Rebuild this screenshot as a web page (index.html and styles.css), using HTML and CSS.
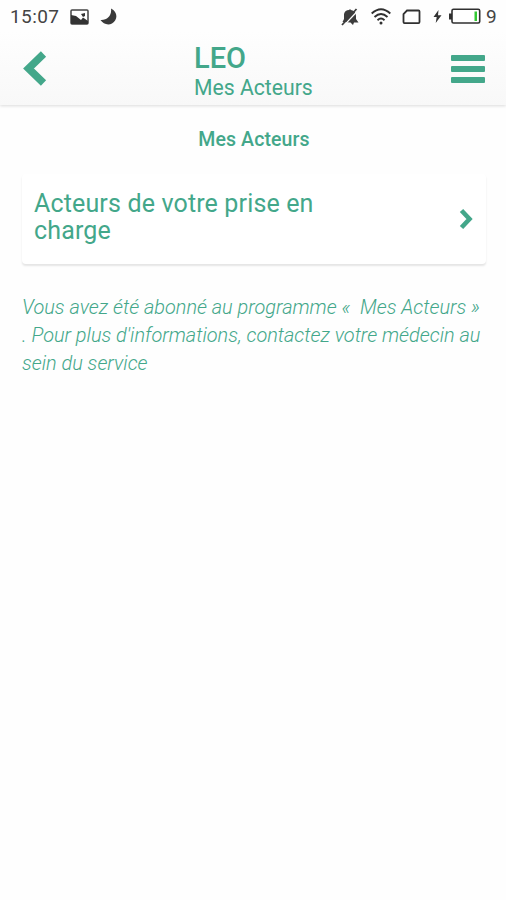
FILE: index.html
```html
<!DOCTYPE html>
<html lang="fr">
<head>
    <meta charset="UTF-8">
    <meta name="viewport" content="width=device-width, initial-scale=1.0">
    <title>LEO - Mes Acteurs</title>
    <link rel="stylesheet" href="styles.css">
</head>
<body>
    <header class="header">
        <div class="status-bar">
            <div class="status-left">
                <span class="time">15:07</span>
                <svg class="picture" width="19" height="16" viewBox="0 0 19 16">
                    <rect x="1" y="1" width="17" height="14" rx="1" fill="#fff" stroke="#444" stroke-width="1.5"/>
                    <path d="M1 6L6 7L11 11L13 8.500L18 12V15H1z" fill="#333"/>
                    <path d="M11 5L15 4V7L13 8z" fill="#333"/>
                </svg>
                <svg class="moon" width="17" height="17" viewBox="0 0 17 17">
                    <path d="M11 0.500C18 4 18 12 12 15.500C8 17.500 3 16 0.500 12C7 12.500 12 8 11 0.500z" fill="#3a3a3a"/>
                </svg>
            </div>
            <div class="status-right">
                <svg class="bell" width="18" height="18" viewBox="0 0 18 18">
                    <path d="M1.500 14L3 11V6Q4 2 8 2Q9 0.500 10 2Q15 3 15 8V11L17.500 14.500H13L12 17L9.500 14.500z" fill="#3c3c3c"/>
                    <path d="M2.500 18L17 2.500" stroke="#fcfcfc" stroke-width="1.200"/>
                    <path d="M1 17L15.500 1" stroke="#3c3c3c" stroke-width="1.800"/>
                </svg>
                <svg class="wifi" width="20" height="17" viewBox="0 0 20 17" fill="none" stroke="#303030" stroke-width="1.900">
                    <path d="M0.700 5.500Q10 -3 19.300 5.500M3.500 9Q10 3 16.500 9M6.500 12.200Q10 9 13.500 12.200"/>
                    <circle cx="10" cy="15" r="1.500" fill="#303030" stroke="none"/>
                </svg>
                <svg class="sim" width="19" height="16" viewBox="0 0 19 16">
                    <path d="M5 1.500H16.500Q17.500 1.500 17.500 2.500V13Q17.500 14.200 16.500 14.200H2.500Q1.500 14.200 1.500 13V5z" fill="none" stroke="#303030" stroke-width="1.800"/>
                </svg>
                <svg class="bolt" width="9" height="13" viewBox="0 0 9 13">
                    <path d="M5.500 0L0.500 7H3.700L2.700 13L8.500 5.200H5z" fill="#333"/>
                </svg>
                <svg class="battery" width="32" height="17" viewBox="0 0 32 17">
                    <rect x="0" y="5.500" width="3" height="6" fill="#303030"/>
                    <rect x="3" y="1.300" width="27.700" height="13.700" rx="1.500" fill="#fff" stroke="#303030" stroke-width="1.600"/>
                    <rect x="25.500" y="3.500" width="2.500" height="9.500" fill="#32c832"/>
                </svg>
                <span class="level">9</span>
            </div>
        </div>
        <div class="nav">
            <a class="back" href="#" aria-label="Retour">
                <svg width="24" height="38" viewBox="0 0 24 38">
                    <path d="M20.500 4L5.500 18.500L20.500 33" fill="none" stroke="#43a78a" stroke-width="7.500"/>
                </svg>
            </a>
            <div class="titles">
                <div class="app-name">LEO</div>
                <div class="page-name">Mes Acteurs</div>
            </div>
            <button class="menu" aria-label="Menu">
                <span></span>
                <span></span>
                <span></span>
            </button>
        </div>
    </header>

    <main class="content">
        <h1>Mes Acteurs</h1>
        <a class="card" href="#">
            <span class="card-title">Acteurs de votre prise en charge</span>
            <svg width="14" height="22" viewBox="0 0 14 22">
                <path d="M2.500 2.500L10.500 11L2.500 19.500" fill="none" stroke="#43a78a" stroke-width="4.600"/>
            </svg>
        </a>
        <p class="info">Vous avez été abonné au programme «&nbsp; Mes Acteurs »<br>. Pour plus d'informations, contactez votre médecin au<br>sein du service</p>
    </main>
</body>
</html>
```

FILE: styles.css
```css
* {
    box-sizing: border-box;
}
body {
    margin: 0;
    min-height: 900px;
    background-color: #fefefe;
    color: #43a78a;
    font-family: Roboto, sans-serif;
}
a {
    color: inherit;
    text-decoration: none;
}
svg {
    display: block;
    flex-shrink: 0;
}
.header {
    height: 105px;
    background: linear-gradient(#fefefe 30%, #f8f8f8);
    box-shadow: 0 1px 3px rgba(0,0,0,0.14);
}
.status-bar {
    display: flex;
    justify-content: space-between;
    height: 33px;
    padding: 0 9px 0 10px;
    color: #444;
    font-size: 19px;
}
.status-left, .status-right {
    display: flex;
    align-items: center;
}
.time {
    width: 60px;
    letter-spacing: 0.4px;
}
.moon {
    margin-left: 11px;
}
.wifi {
    margin-left: 12px;
}
.sim {
    margin-left: 11px;
}
.bolt {
    margin-left: 12px;
}
.battery {
    margin-left: 7px;
}
.level {
    width: 11px;
    margin-left: 5px;
}
.nav {
    display: grid;
    grid-template-columns: 171px 1fr 34px;
    height: 72px;
    padding: 0 21px 0 23px;
}
.back {
    padding-top: 17px;
}
.titles {
    padding-top: 9px;
    white-space: nowrap;
}
.app-name {
    font-size: 29px;
    font-weight: 500;
    line-height: 33px;
}
.page-name {
    font-size: 21.2px;
    line-height: 26px;
}
.menu {
    display: flex;
    flex-direction: column;
    gap: 5px;
    padding: 22px 0 0;
    border: none;
    background: none;
}
.menu span {
    width: 34px;
    height: 6px;
    border-radius: 1px;
    background-color: #43a78a;
}
.content {
    padding: 23px 20px 0 22px;
}
h1 {
    margin: 0;
    font-size: 19.5px;
    font-weight: 500;
    line-height: 24px;
    letter-spacing: 0.1px;
    text-align: center;
}
.card {
    display: flex;
    align-items: center;
    justify-content: space-between;
    height: 90px;
    margin-top: 22px;
    padding: 0 13px 0 12px;
    border-radius: 4px;
    background-color: #fff;
    box-shadow: 0 2px 2px rgba(0,0,0,0.1);
}
.card-title {
    width: 310px;
    padding-bottom: 5px;
    font-size: 25px;
    line-height: 27px;
    letter-spacing: 0.15px;
}
.info {
    margin: 30px 0 0;
    font-size: 19.9px;
    font-style: italic;
    font-weight: 300;
    line-height: 28px;
    white-space: nowrap;
}
```
